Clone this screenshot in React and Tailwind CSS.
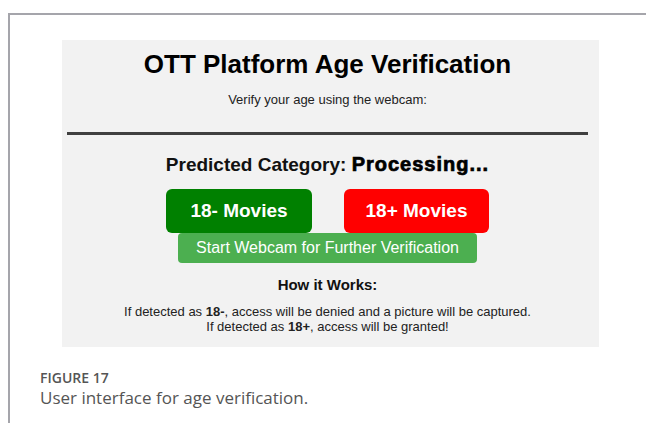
// App.jsx — age check screen shown inside a figure frame

const panelFont = { fontFamily: '"Liberation Sans", Arial, sans-serif' }
const captionFont = { fontFamily: '"Open Sans", "Noto Sans", sans-serif' }

function AgeCheckPanel() {
  return (
    <div
      className="w-[537px] h-[307px] bg-[#f2f2f2] pr-[6px] flex flex-col items-center text-black"
      style={panelFont}
    >
      <h1 className="mt-[11px] text-[26px] leading-[26px] font-bold">OTT Platform Age Verification</h1>
      <p className="mt-[16px] text-[13px] leading-[13px] text-[#222]">Verify your age using the webcam:</p>

      <div className="mt-[26px] self-stretch mx-[5px] h-[3px] bg-[#404040]" />

      <h2 className="mt-[20px] text-[19px] leading-[19px] font-bold text-[#111]">
        Predicted Category:{' '}
        <span className="text-[20px] tracking-[1px] font-black text-black [-webkit-text-stroke:0.7px_black]">
          Processing...
        </span>
      </h2>

      <div className="mt-[15px] flex gap-[32px]">
        <button className="w-[146px] h-[44px] rounded-[6px] bg-[#008000] text-white text-[19px] font-bold">
          18- Movies
        </button>
        <button className="w-[145px] h-[44px] rounded-[6px] bg-[#ff0000] text-white text-[19px] font-bold">
          18+ Movies
        </button>
      </div>
      <button className="w-[299px] h-[30px] rounded-[4px] bg-[#4caf50] text-white text-[16px]">
        Start Webcam for Further Verification
      </button>

      <h3 className="mt-[14px] text-[15px] leading-[15px] font-bold text-[#111]">How it Works:</h3>
      <div className="mt-[13px] text-[13px] leading-[14.5px] text-[#222] text-center">
        <p>If detected as <b>18-</b>, access will be denied and a picture will be captured.</p>
        <p>If detected as <b>18+</b>, access will be granted!</p>
      </div>
    </div>
  )
}

export default function App() {
  return (
    <div className="w-[646px] h-[423px] bg-white pt-[13px] pl-[8px] overflow-hidden">
      <div className="h-full border-l-2 border-t-2 border-[#a5a5ab]">
        <div className="ml-[52px] mt-[25px]">
          <AgeCheckPanel />
        </div>
        <div className="pl-[30px] mt-[22px]" style={captionFont}>
          <p className="text-[14px] leading-[18px] font-semibold text-[#555]">FIGURE 17</p>
          <p className="text-[17px] leading-[22px] text-[#555]">User interface for age verification.</p>
        </div>
      </div>
    </div>
  )
}
